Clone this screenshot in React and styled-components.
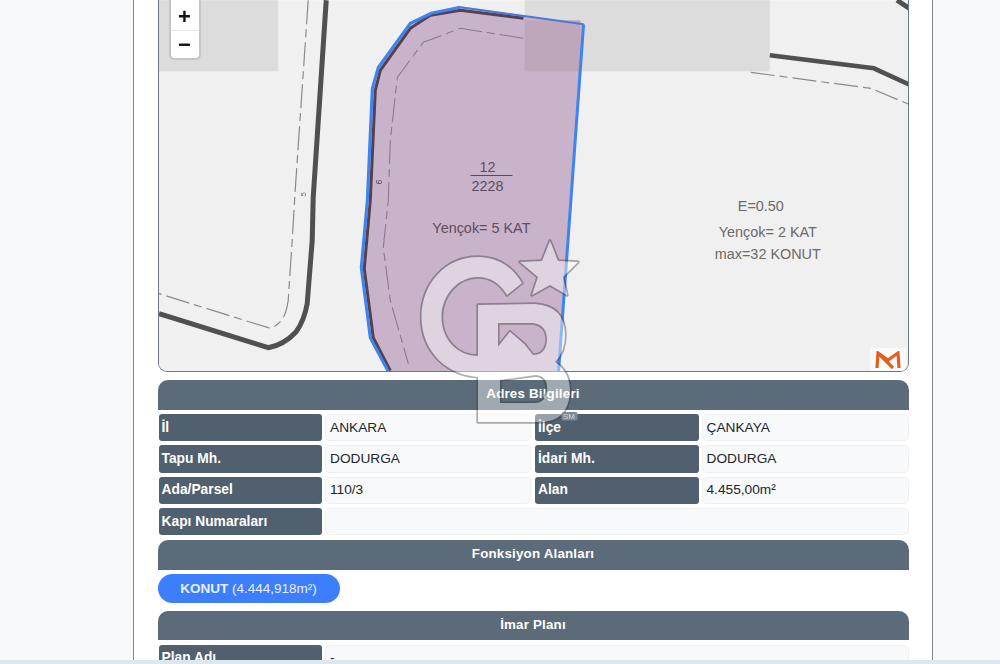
import styled, { createGlobalStyle } from 'styled-components';

const GlobalStyle = createGlobalStyle`
html, body {
  margin: 0;
  padding: 0;
  height: 664px;
  overflow: hidden;
  background: #f8f9fb;
  font-family: "Liberation Sans", Arial, sans-serif;
}
`

const rows = [
  [{ label: "İl", value: "ANKARA" }, { label: "İlçe", value: "ÇANKAYA" }],
  [{ label: "Tapu Mh.", value: "DODURGA" }, { label: "İdari Mh.", value: "DODURGA" }],
  [{ label: "Ada/Parsel", value: "110/3" }, { label: "Alan", value: "4.455,00m²" }],
];

const MapDrawing = () => (
  <MapSvg viewBox="159 0 748 370">
    <rect x="159" y="0" width="748" height="370" fill="#f0f0f0" />
    <rect x="159" y="0" width="119" height="71" fill="#dcdcdc" />
    <rect x="524" y="0" width="245" height="71" fill="#dcdcdc" />

    {/* roads */}
    <g fill="none" stroke="#505050" strokeLinejoin="round">
      <path strokeWidth="5" d="M326 0 L313 197 L312 240 L307 303 Q304 320 296 331 Q284 344 268 347 L159 313" />
      <path strokeWidth="4.5" d="M769 55 L873 68 L908 84" />
      <path strokeWidth="5" d="M896 0 L908 8" />
    </g>
    <g fill="none" stroke="#8a8a8a" strokeWidth="1.2" strokeDasharray="24 5 8 5">
      <path d="M308 0 L295 190 L292 240 L288 300 Q286 314 281 320 Q274 328 268 327 L159 293" />
      <path d="M750 72 L870 88 L908 104" />
    </g>

    {/* parcel */}
    <path
      d="M460 6 L583 24 L558 371 L388 371 L370 337 L361 267 L367 200 L372 88 L378 67 L410 23 L431 13 Z"
      fill="#c9b3cb"
    />
    <rect x="524" y="20" width="56" height="51" fill="#bea7ba" />
    <path
      fill="none"
      stroke="#54404f"
      strokeWidth="3"
      d="M523 18 L460 10 L430 15 L410 28 L380 70 L375 90 L370 200 L364 268 L373 337 L390 370"
    />
    <path
      fill="none"
      stroke="#8a7a88"
      strokeWidth="1.1"
      strokeDasharray="24 5 8 5"
      d="M523 38 L460 28 L423 42 L397 77 L390 140 L388 200 L383 247 L390 300 L408 363"
    />
    <path
      fill="none"
      stroke="#3f83ee"
      strokeWidth="3"
      d="M583 24 L558 371 M388 371 L370 337 L361 267 L367 200 L372 88 L378 67 L410 23 L431 13 L460 7"
    />
    <path fill="none" stroke="#4a78d8" strokeWidth="2" d="M460 7 L583 24" />

    {/* texts printed on the plan */}
    <MapText x="487" y="172" textAnchor="middle" fontSize="14.4">12</MapText>
    <line x1="470" y1="175" x2="512" y2="175" stroke="#5a4a58" strokeWidth="1" />
    <MapText x="487" y="190" textAnchor="middle" fontSize="14.4">2228</MapText>
    <MapText x="432" y="232" fontSize="14.4">Yençok= 5 KAT</MapText>
    <MapText x="737" y="210" fontSize="14.4" $light>E=0.50</MapText>
    <MapText x="718" y="236" fontSize="14.4" $light>Yençok= 2 KAT</MapText>
    <MapText x="714" y="258" fontSize="14.4" $light>max=32 KONUT</MapText>
    <MapText x="0" y="0" fontSize="8" transform="translate(306 196) rotate(-90)" $light>5</MapText>
    <MapText x="0" y="0" fontSize="9" transform="translate(382 184) rotate(-90)">6</MapText>
  </MapSvg>
);

const gPath = "M522 283 C512 266 497 257 478 257 C445 257 421.5 284 421.5 317 C421.5 352 448 377 482 377 C500 377 515 365 525 345 L510 332 L498 347 L498 356 L478 356 C458 356 441.5 340 441.5 317 C441.5 295 458 277 478 277 C490 277 500 283 507 295 Z";
const starPath = "M550 241 L558 261 L578 262 L563 277 L567 295 L550 285 L532 295 L538 277 L520 262 L542 261 Z";
const bPath = `M478 305 L535 304 Q565 306 565 335 Q565 352 555 362 Q570 372 570 392 Q568 422 540 422 L478 422 Z
  M498 323 L533 323 Q547 325 547 340 Q546 355 533 355 L525 345 L510 332 L498 347 Z
  M500 380 L536 375 Q548 376 547 390 Q546 403 534 403 L500 403 Z`;

// outline is painted first and the fill over it, so the letters join in one shape
const Watermark = () => (
  <WatermarkSvg viewBox="0 0 1000 664">
    <g opacity="0.42" strokeLinejoin="round" fillRule="evenodd">
      <g fill="none" stroke="#3c3c3c" strokeWidth="3.4">
        <path d={gPath} />
        <path d={starPath} />
        <path d={bPath} />
      </g>
      <g fill="#fff">
        <path d={gPath} />
        <path d={starPath} />
        <path d={bPath} />
      </g>
    </g>
    <rect x="561.5" y="412" width="16" height="8.5" rx="2" fill="#7d8995" />
    <WatermarkMark x="563" y="419" fontSize="8">SM</WatermarkMark>
  </WatermarkSvg>
);

const App = () => (
  <>
    <GlobalStyle />
    <Page>
      <Viewport>
        <Card>
          <MapBox>
            <MapDrawing />
            <ZoomControl>
              <ZoomButton>+</ZoomButton>
              <ZoomButton>−</ZoomButton>
            </ZoomControl>
            <Logo>
              <svg width="26" height="18" viewBox="0 0 26 18">
                <path d="M2 17 L3 2 L13 9 L23 2 L24 17 M3 2 L18 17" fill="none" stroke="#e0601e" strokeWidth="3.2" />
              </svg>
            </Logo>
          </MapBox>

          <SectionTitle>Adres Bilgileri</SectionTitle>
          <InfoGrid>
            {rows.map(row => row.map(cell => (
              <Cell key={cell.label} {...cell} />
            )))}
            <Label>Kapı Numaraları</Label>
            <Value $wide />
          </InfoGrid>

          <SectionTitle>Fonksiyon Alanları</SectionTitle>
          <PillRow>
            <Pill><b>KONUT</b> (4.444,918m²)</Pill>
          </PillRow>

          <SectionTitle>İmar Planı</SectionTitle>
          <InfoGrid>
            <Label>Plan Adı</Label>
            <Value $wide>-</Value>
          </InfoGrid>
          <Watermark />
        </Card>
      </Viewport>
      <BottomStrip />
    </Page>
  </>
);

const Cell = ({ label, value }) => (
  <>
    <Label>{label}</Label>
    <Value>{value}</Value>
  </>
);

export default App;

const Page = styled.div`
display: flex;
flex-direction: column;
height: 664px;
`
const Viewport = styled.div`
height: 660px;
overflow: hidden;
padding-left: 133px;
`
const Card = styled.div`
box-sizing: border-box;
width: 800px;
height: 660px;
padding: 0 23.5px;
background: #fff;
border-left: 1.5px solid #808891;
border-right: 1.5px solid #808891;
display: flex;
flex-direction: column;
`
const MapBox = styled.div`
position: relative;
flex: none;
box-sizing: border-box;
height: 372px;
border: 1.5px solid #6e7780;
border-top: 0;
border-radius: 0 0 9px 9px;
overflow: hidden;
`
const MapSvg = styled.svg`
display: block;
width: 100%;
height: 100%;
filter: blur(0.5px);
`
const MapText = styled.text`
font-family: "Liberation Sans", Arial, sans-serif;
fill: ${p => p.$light ? '#6a6a6a' : '#5e4d5c'};
`
const ZoomControl = styled.div`
position: absolute;
left: 10px;
top: 0;
width: 32px;
height: 60px;
background: #fff;
background-clip: padding-box;
border: 2px solid #c6c6c6;
border-top: 0;
border-radius: 0 0 5px 5px;
display: flex;
flex-direction: column;
box-sizing: border-box;
`
const ZoomButton = styled.div`
flex: 1;
display: flex;
align-items: center;
justify-content: center;
color: #111;
font-size: 22px;
font-weight: bold;
line-height: 1;
font-family: "Liberation Sans", Arial, sans-serif;
&:first-child {
  padding-top: 3px;
  border-bottom: 1px solid #e4e4e4;
}
`
const Logo = styled.div`
position: absolute;
right: 2px;
bottom: 0;
width: 36px;
height: 23px;
background: #fafafa;
display: flex;
align-items: center;
justify-content: center;
`
const SectionTitle = styled.div`
flex: none;
box-sizing: border-box;
height: 29.5px;
margin-top: 8px;
padding-bottom: 2px;
background: #5b6b7a;
border-radius: 10px 10px 0 0;
color: #fff;
font-size: 13.33px;
font-weight: bold;
letter-spacing: 0.2px;
display: flex;
align-items: center;
justify-content: center;
`
const InfoGrid = styled.div`
flex: none;
display: grid;
grid-template-columns: 164.5px 206px 164.5px 1fr;
grid-auto-rows: 27.3px;
gap: 4px 3px;
margin-top: 4.5px;
margin-bottom: -3.2px;
`
const Label = styled.div`
box-sizing: border-box;
margin-left: 1px;
padding: 0 0 1px 3px;
background: #50606f;
border-radius: 3px;
color: #fff;
font-size: 13.8px;
font-weight: bold;
display: flex;
align-items: center;
`
const Value = styled.div`
box-sizing: border-box;
padding: 0 0 1px 4px;
background: #f8f9fa;
border: 1px solid #f0f0f0;
border-radius: 5px;
color: #212529;
font-size: 13.7px;
display: flex;
align-items: center;
${p => p.$wide ? 'grid-column: 2 / -1;' : ''}
`
const PillRow = styled.div`
flex: none;
padding-top: 4px;
display: flex;
`
const Pill = styled.div`
box-sizing: border-box;
width: 182px;
height: 29px;
border-radius: 15px;
background: #3d7efc;
color: #e8f0ff;
font-size: 13.5px;
display: flex;
align-items: center;
justify-content: center;
white-space: pre-wrap;
`
const WatermarkSvg = styled.svg`
position: absolute;
left: 0;
top: 0;
width: 1000px;
height: 664px;
pointer-events: none;
`
const WatermarkMark = styled.text`
font-family: "Liberation Sans", Arial, sans-serif;
fill: #d8d8d8;
`
const BottomStrip = styled.div`
flex: none;
height: 4px;
background: #dbe9ee;
`
